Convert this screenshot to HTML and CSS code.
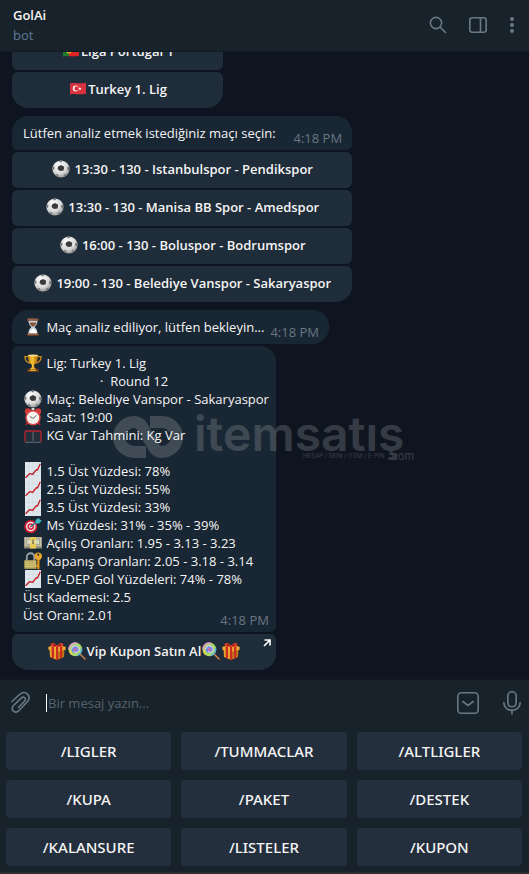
FILE: index.html
```html
<!DOCTYPE html>
<html lang="tr">
<head>
    <meta charset="UTF-8">
    <meta name="viewport" content="width=device-width, initial-scale=1.0">
    <title>GolAi</title>
    <link rel="stylesheet" href="styles.css">
</head>
<body>
    <!-- Emoji sprite -->
    <svg class="sprite" aria-hidden="true">
        <defs>
            <radialGradient id="ballShade" cx="0.4" cy="0.3" r="0.75">
                <stop offset="0" stop-color="#ffffff"/>
                <stop offset="0.6" stop-color="#d9d9d9"/>
                <stop offset="1" stop-color="#8e8e8e"/>
            </radialGradient>
            <linearGradient id="gold" x1="0" x2="1" y1="0" y2="0">
                <stop offset="0" stop-color="#b87408"/>
                <stop offset="0.4" stop-color="#fbc739"/>
                <stop offset="1" stop-color="#a9660a"/>
            </linearGradient>
        </defs>
        <symbol id="ball" viewBox="0 0 18 18">
            <circle cx="9" cy="9" r="8.6" fill="url(#ballShade)"/>
            <path d="M6 6.6 9 5l3.2 1.8-.6 3.6-3.8.6L5.6 9z" fill="#3b3b3b"/>
            <path d="M7 .8l3.6-.2L9.4 2.2H7.8zM.6 7l1.6-.8.2 2.6-1.6 2zM17.4 7.4l-1.8-.8-.6 2.4 1.8 2zM3.4 14l2.4.2 1 2.6-1.6-.6zM12 14.6l2.6-.8-1 1.8-2 1.2z" fill="#777"/>
        </symbol>
        <symbol id="hourglass" viewBox="0 0 18 18">
            <path d="M4.4 2h9.2c0 4-1.4 5.4-3.2 7 1.8 1.6 3.2 3 3.2 7H4.400c0-4 1.400-5.400 3.200-7-1.800-1.600-3.200-3-3.200-7z" fill="#c9d2d8"/>
            <path d="M5.400 4.600h7.200c-.6 2.200-2 3.200-3.600 4.200-1.600-1-3-2-3.600-4.200z" fill="#8a5137"/>
            <path d="M9 10.500c2 1.400 3.400 2.600 3.800 5H5.200c.4-2.400 1.800-3.600 3.800-5z" fill="#fff"/>
            <path d="M3 .4h12v2.400H3zM3 15.400h12v2.300H3z" fill="#74442f"/>
            <path d="M4 .8h9v.7H4zM4 15.800h9v.6H4z" fill="#b58068"/>
        </symbol>
        <symbol id="trophy" viewBox="0 0 18 18">
            <path d="M4.400 2.600H.9c0 4 2 6 5 6.400M13.600 2.600h3.500c0 4-2 6-5 6.400" fill="none" stroke="#d08f18" stroke-width="1.300"/>
            <path d="M4 1h10c0 5-1 8.500-3.800 9.600v2.600c.2 1 2 1.200 2.400 2.200H5.400c.4-1 2.200-1.200 2.400-2.200v-2.600C5 9.500 4 6 4 1z" fill="url(#gold)"/>
            <ellipse cx="9" cy="1.500" rx="5" ry=".9" fill="#ffe08a"/>
            <path d="M3.600 15.200h10.800v2.500H3.600z" fill="#8a4c0c"/>
            <path d="M6 15.600h6v1.300H6z" fill="#e8b23c"/>
        </symbol>
        <symbol id="clock" viewBox="0 0 18 18">
            <path d="M3.500 14.500l-1.600 2.800M14.500 14.500l1.600 2.800" stroke="#a32626" stroke-width="1.600"/>
            <circle cx="3.900" cy="3.400" r="3.100" fill="#d13a3a"/>
            <circle cx="14.100" cy="3.400" r="3.100" fill="#d13a3a"/>
            <path d="M7.500 0h3v2h-3z" fill="#d8d8d8"/>
            <circle cx="9" cy="9.800" r="7.700" fill="#d84545"/>
            <circle cx="9" cy="9.800" r="6.200" fill="#f6f2ee"/>
            <path d="M5.800 8.400L9 10.400l3.500-3" fill="none" stroke="#555" stroke-width=".9"/>
        </symbol>
        <symbol id="goal" viewBox="0 0 18 18">
            <path d="M2.500 6h13l1.600 9.500H.9z" fill="#242f39"/>
            <path d="M1 15.500V6.500Q1 5 2.500 5h13Q17 5 17 6.500v9" fill="none" stroke="#b8262f" stroke-width="1.300"/>
            <path d="M9 6v9M1 16.300h16" fill="none" stroke="#76808a" stroke-width=".8"/>
        </symbol>
        <symbol id="chart" viewBox="0 0 18 18">
            <path d="M1 0h16v18H1z" fill="#dfe7ec"/>
            <path d="M1 4.500h16M1 9h16M1 13.500h16M5 0v18M9 0v18M13 0v18" stroke="#cfdae1" stroke-width=".6"/>
            <path d="M1.600 15.800l4-4.200 3.200.6 3.500-4.600 1.300.2 2.700-6" fill="none" stroke="#c5161d" stroke-width="1.300"/>
        </symbol>
        <symbol id="target" viewBox="0 0 18 18">
            <circle cx="6.800" cy="10.600" r="6.600" fill="#c81e33"/>
            <circle cx="6.800" cy="10.600" r="4.800" fill="#f3e9ea"/>
            <circle cx="6.800" cy="10.600" r="3.400" fill="#d2243a"/>
            <circle cx="6.800" cy="10.600" r="1.800" fill="#f3e9ea"/>
            <circle cx="6.800" cy="10.600" r=".8" fill="#d2243a"/>
            <path d="M7 10.500L13 5.500" stroke="#247c8c" stroke-width="1.300"/>
            <path d="M11.400 6.800l.4-3L15.400 2l.2 1.800 2.200.4-2.200 3-3 .6z" fill="#3db6c0"/>
        </symbol>
        <symbol id="money" viewBox="0 0 18 18">
            <path d="M0 3h18v11.500H0z" fill="#8c8d74"/>
            <path d="M.8 3.600h16.400v8.600H.8z" fill="#d6d5bd"/>
            <path d="M2.200 5h13.600v5.800H2.200z" fill="none" stroke="#85876d" stroke-width=".8"/>
            <path d="M6 3h6v11.500H6z" fill="#e8c94d"/>
            <circle cx="9" cy="8" r="2.800" fill="#f4e8a8"/>
            <path d="M10.400 6.600C9 5.800 7.700 6.400 8 7.300c.3.800 2 .5 2.100 1.400.1.900-1.300 1.200-2.500.5M9 5.500v5" fill="none" stroke="#6d6226" stroke-width=".8"/>
        </symbol>
        <symbol id="lock" viewBox="0 0 18 18">
            <path d="M2.800 9V5c0-5 7.400-5 7.400 0v4" fill="none" stroke="#98a1a6" stroke-width="1.800"/>
            <path d="M.4 8.200h12v8.600H.4z" fill="#b9aa5b"/>
            <path d="M.4 10h12M.4 12.200h12M.4 14.400h12" stroke="#dacd86" stroke-width=".8"/>
            <path d="M13.300 6.500h2.200v10l-1 1.300-1.200-1.200v-1.500l-1.300-.6v-1.300l1.300-.4z" fill="#e29a20"/>
            <circle cx="14.200" cy="4.200" r="3.700" fill="#eba72b"/>
            <circle cx="14.200" cy="2.700" r="1.100" fill="#263239"/>
        </symbol>
        <symbol id="gift" viewBox="0 0 18 18">
            <path d="M1.500 6.500L9 9v9l-7-3z" fill="#e9a32b"/>
            <path d="M16.500 6.500L9 9v9l7-3z" fill="#bd7817"/>
            <path d="M.4 4.800L9 3l8.600 1.800v3L9 10 .4 7.800z" fill="#f0a932"/>
            <path d="M3.600 5.200L6 4.600v12.200l-2.200-.9zM12 4.600l2.400.6-.2 10.700-2.200.9zM8 3.500h2.200V18H8z" fill="#c92d20"/>
            <path d="M9 4.500C4 5.600 1.600 3.800 3 1.800 4.500-.2 8 1.200 9 4.500c1-3.300 4.500-4.700 6-2.700 1.400 2-1 3.800-6 2.700z" fill="#dd3a2b"/>
            <path d="M8.600 3.900C6.600 4.300 4.700 3.700 5.200 2.800c.5-.8 2.400-.2 3.400 1.100zM9.400 3.900c2 .4 3.900-.2 3.400-1.100-.5-.8-2.400-.2-3.400 1.100z" fill="#8f1a14"/>
        </symbol>
        <symbol id="lollipop" viewBox="0 0 18 18">
            <path d="M11 11l6 6" stroke="#c07a45" stroke-width="1.700" stroke-linecap="round"/>
            <circle cx="7.300" cy="7.300" r="6.900" fill="#a9d86a"/>
            <path d="M1 7.300a6.300 6.300 0 0 1 8-6" fill="none" stroke="#e59ad2" stroke-width="1.500"/>
            <path d="M13.500 6a6.300 6.300 0 0 1-4.500 7.400" fill="none" stroke="#5bb3d8" stroke-width="1.500"/>
            <path d="M4 12.200A5.500 5.500 0 0 1 2.200 8" fill="none" stroke="#f0d451" stroke-width="1.600"/>
            <circle cx="7.300" cy="7.300" r="3.800" fill="#6f8fe0"/>
            <path d="M3.400 7.300a3.900 3.900 0 0 1 7.600-.8 3 3 0 0 1-5 3" fill="none" stroke="#f3dcec" stroke-width="1"/>
            <circle cx="7.400" cy="7.400" r="1.500" fill="#d665b1"/>
        </symbol>
        <symbol id="flagTr" viewBox="0 0 18 18">
            <path d="M1 3.500c5-1.600 10 1 16-.8v11c-6 1.800-11-.8-16 .8z" fill="#d8323f"/>
            <circle cx="6.800" cy="8.500" r="3" fill="#fff"/>
            <circle cx="7.700" cy="8.500" r="2.300" fill="#d8323f"/>
            <path d="M10.900 6.900l.4 1.100 1.200.1-.9.800.3 1.200-1-.7-1 .7.300-1.200-.9-.8 1.200-.1z" fill="#fff"/>
        </symbol>
        <symbol id="flagPt" viewBox="0 0 18 18">
            <path d="M1 3.500c5-1.600 10 1 16-.8v11c-6 1.800-11-.8-16 .8z" fill="#e02420"/>
            <path d="M1 3.500c2-.7 4-.6 6-.3v11c-2-.3-4-.2-6 .3z" fill="#1c7a2b"/>
            <circle cx="7" cy="8.800" r="2.700" fill="#e8cf35"/>
            <path d="M5.800 7.400h2.400v2.400L7 10.900l-1.200-1.100z" fill="#d8322f"/>
        </symbol>
    </svg>

    <header class="topbar">
        <div class="peer">
            <h1>GolAi</h1>
            <p>bot</p>
        </div>
        <div class="actions">
            <button class="icon-btn" aria-label="Ara">
                <svg width="18" height="18" viewBox="0 0 18 18"><circle cx="7" cy="7" r="5.600"/><path d="M11.200 11.200l5.300 5.300"/></svg>
            </button>
            <button class="icon-btn" aria-label="Yan panel">
                <svg width="18" height="18" viewBox="0 0 18 18"><rect x=".8" y="1.800" width="16.400" height="14.400" rx="2.500"/><path d="M11.500 2v14"/></svg>
            </button>
            <button class="icon-btn dots" aria-label="Menü">
                <svg width="6" height="18" viewBox="0 0 6 18"><circle cx="3" cy="3" r="2"/><circle cx="3" cy="9" r="2"/><circle cx="3" cy="15" r="2"/></svg>
            </button>
        </div>
    </header>

    <main class="chat">
        <div class="group leagues">
            <button class="inline-btn"><svg class="emoji"><use href="#flagPt"/></svg>Liga Portugal 1</button>
            <button class="inline-btn"><svg class="emoji"><use href="#flagTr"/></svg>Turkey 1. Lig</button>
        </div>

        <div class="group matches">
            <div class="message">
                <p>Lütfen analiz etmek istediğiniz maçı seçin:</p>
                <time>4:18 PM</time>
            </div>
            <button class="inline-btn"><svg class="emoji"><use href="#ball"/></svg> 13:30 - 130 - Istanbulspor - Pendikspor</button>
            <button class="inline-btn"><svg class="emoji"><use href="#ball"/></svg> 13:30 - 130 - Manisa BB Spor - Amedspor</button>
            <button class="inline-btn"><svg class="emoji"><use href="#ball"/></svg> 16:00 - 130 - Boluspor - Bodrumspor</button>
            <button class="inline-btn"><svg class="emoji"><use href="#ball"/></svg> 19:00 - 130 - Belediye Vanspor - Sakaryaspor</button>
        </div>

        <div class="group waiting">
            <div class="message">
                <p><svg class="emoji"><use href="#hourglass"/></svg> Maç analiz ediliyor, lütfen bekleyin...</p>
                <time>4:18 PM</time>
            </div>
        </div>

        <div class="group analysis">
            <div class="message">
                <div class="lines">
                    <p><svg class="emoji"><use href="#trophy"/></svg> Lig: Turkey 1. Lig</p>
                    <p class="round">·&nbsp; Round 12</p>
                    <p><svg class="emoji"><use href="#ball"/></svg> Maç: Belediye Vanspor - Sakaryaspor</p>
                    <p><svg class="emoji"><use href="#clock"/></svg> Saat: 19:00</p>
                    <p><svg class="emoji"><use href="#goal"/></svg> KG Var Tahmini: Kg Var</p>
                    <br>
                    <p><svg class="emoji"><use href="#chart"/></svg> 1.5 Üst Yüzdesi: 78%</p>
                    <p><svg class="emoji"><use href="#chart"/></svg> 2.5 Üst Yüzdesi: 55%</p>
                    <p><svg class="emoji"><use href="#chart"/></svg> 3.5 Üst Yüzdesi: 33%</p>
                    <p><svg class="emoji"><use href="#target"/></svg> Ms Yüzdesi: 31% - 35% - 39%</p>
                    <p><svg class="emoji"><use href="#money"/></svg> Açılış Oranları: 1.95 - 3.13 - 3.23</p>
                    <p><svg class="emoji"><use href="#lock"/></svg> Kapanış Oranları: 2.05 - 3.18 - 3.14</p>
                    <p><svg class="emoji"><use href="#chart"/></svg> EV-DEP Gol Yüzdeleri: 74% - 78%</p>
                    <p>Üst Kademesi: 2.5</p>
                    <p>Üst Oranı: 2.01</p>
                </div>
                <time>4:18 PM</time>
            </div>
            <button class="inline-btn">
                <svg class="emoji"><use href="#gift"/></svg><svg class="emoji"><use href="#lollipop"/></svg>Vip Kupon Satın Al<svg class="emoji"><use href="#lollipop"/></svg><svg class="emoji"><use href="#gift"/></svg>
                <svg class="external" viewBox="0 0 8 8"><path d="M1.500 1H7v5.500M7 1L1 7"/></svg>
            </button>
        </div>

        <div class="watermark">
            <svg width="72" height="44" viewBox="0 0 72 44">
                <path d="M34 37H22a15 15 0 0 1 0-30c3 0 5 1 7 3L43 34c2 2 4 3 7 3a15 15 0 0 0 0-30H38"/>
            </svg>
            <div class="brand">
                <span class="name">itemsatış</span>
                <div class="sub">
                    <span class="tagline">HESAP / SKIN / ITEM / E-PIN</span>
                    <span class="domain">.com</span>
                </div>
            </div>
        </div>
    </main>

    <footer class="composer">
        <form class="entry">
            <button type="button" class="icon-btn" aria-label="Dosya ekle">
                <svg width="22" height="24" viewBox="0 0 22 24"><path d="M2 10.500L9.500 3.500c6-5 12.500 1.500 8 7l-8.500 9c-4 4-9-.5-5.500-5L11 7.300c3-2.700 6 .3 3.500 3l-6 6.200"/></svg>
            </button>
            <input type="text" aria-label="Mesaj" placeholder="Bir mesaj yazın...">
            <button type="button" class="icon-btn" aria-label="Klavyeyi gizle">
                <svg width="22" height="22" viewBox="0 0 22 22"><rect x=".8" y=".8" width="20.400" height="20.400" rx="3.500"/><path d="M5.800 9.500L11 13.500l5.200-4"/></svg>
            </button>
            <button type="button" class="icon-btn mic" aria-label="Ses kaydı">
                <svg width="18" height="24" viewBox="0 0 18 24"><rect x="4.800" y=".8" width="8.400" height="15" rx="4.200"/><path d="M.8 11.500c0 10.500 16.400 10.500 16.400 0M9 19.500V23"/></svg>
            </button>
        </form>
        <div class="keyboard">
            <button>/LIGLER</button>
            <button>/TUMMACLAR</button>
            <button>/ALTLIGLER</button>
            <button>/KUPA</button>
            <button>/PAKET</button>
            <button>/DESTEK</button>
            <button>/KALANSURE</button>
            <button>/LISTELER</button>
            <button>/KUPON</button>
        </div>
    </footer>
</body>
</html>
```
FILE: styles.css
```css
* {
    box-sizing: border-box;
    margin: 0;
    padding: 0;
}

body {
    display: flex;
    flex-direction: column;
    height: 100vh;
    background: #0e1520;
    color: #f5f5f5;
    font-family: 'Open Sans', 'Noto Sans', sans-serif;
    font-size: 13px;
    line-height: 18px;
}

button,
input {
    font: inherit;
    color: inherit;
    border: none;
    background: none;
}

button {
    cursor: pointer;
}

.sprite {
    position: absolute;
    width: 0;
    height: 0;
}

.emoji {
    width: 18px;
    height: 18px;
    margin: 0 1px;
    vertical-align: top;
}

/* Header */
.topbar {
    display: flex;
    justify-content: space-between;
    flex: none;
    height: 52px;
    padding: 6px 14px 0 13px;
    background: #18222b;
    border-bottom: 1px solid #121a23;
}

.peer h1 {
    font-size: 13px;
    font-weight: 600;
}

.peer p {
    margin-top: 2px;
    color: #5f7b98;
}

.actions {
    display: flex;
    align-items: center;
    gap: 22px;
    height: 38px;
}

.icon-btn {
    display: flex;
}

.icon-btn svg {
    fill: none;
    stroke: #6b7882;
    stroke-width: 1.6;
    stroke-linecap: round;
}

.icon-btn.dots svg {
    fill: #6b7882;
    stroke: none;
}

/* Messages */
.chat {
    position: relative;
    display: flex;
    flex-direction: column;
    justify-content: flex-end;
    align-items: flex-start;
    flex: 1;
    min-height: 0;
    padding: 0 12px 9px;
    overflow: hidden;
}

.group {
    display: flex;
    flex-direction: column;
    gap: 2px;
    flex: none;
    margin-top: 8px;
}

.leagues {
    min-width: 211px;
}

.analysis {
    margin-top: 2px;
}

.message {
    display: flex;
    justify-content: space-between;
    gap: 6px;
    padding: 8px 10px 3px 11px;
    background: #192633;
    border-radius: 16px 16px 6px 6px;
}

.message p {
    white-space: nowrap;
    padding-bottom: 5px;
}

.message time {
    align-self: flex-end;
    color: #687683;
}

.waiting .message {
    border-bottom-right-radius: 16px;
}

.analysis .message {
    display: grid;
    padding-right: 7px;
    border-top-left-radius: 6px;
}

.analysis .lines,
.analysis time {
    grid-area: 1 / 1;
}

.analysis .lines {
    padding-bottom: 5px;
}

.analysis .lines p {
    padding-bottom: 0;
}

.analysis time {
    justify-self: end;
}

.message .round {
    padding-left: 77px;
}

.inline-btn {
    position: relative;
    padding: 8px 21px 10px;
    background: #1f2c39;
    border-radius: 6px;
    font-weight: 600;
    text-align: center;
    white-space: nowrap;
}

.inline-btn:last-child {
    border-radius: 6px 6px 16px 16px;
}

.external {
    position: absolute;
    top: 5px;
    right: 5px;
    width: 8px;
    height: 8px;
    fill: none;
    stroke: #fff;
    stroke-width: 1.6;
}

/* Watermark laid over the conversation */
.watermark {
    position: absolute;
    top: 363px;
    left: 112px;
    display: flex;
    gap: 10px;
    opacity: 0.17;
    pointer-events: none;
}

.watermark svg {
    fill: none;
    stroke: #fff;
    stroke-width: 12;
}

.brand {
    font-family: Inter, sans-serif;
}

.brand .name {
    display: block;
    font-size: 48px;
    font-weight: 600;
    line-height: 38px;
}

.brand .sub {
    display: flex;
    gap: 4px;
    margin-left: 109px;
}

.brand .tagline {
    font-size: 6px;
    line-height: 6px;
}

.brand .domain {
    font-size: 11px;
    line-height: 6px;
}

/* Composer and bot keyboard */
.composer {
    flex: none;
    background: #18222b;
    border-top: 1px solid #111922;
    border-bottom: 2px solid #2c2b2d;
}

.entry {
    display: flex;
    align-items: center;
    height: 46px;
    padding: 0 8px 0 10px;
}

.entry input {
    flex: 1;
    min-width: 0;
    height: 18px;
    margin: 0 16px 0 14px;
    padding-left: 1px;
    border-left: 1px solid #fff;
    outline: none;
}

.entry input::placeholder {
    color: #56626c;
    opacity: 1;
}

.mic {
    margin-left: 24px;
}

.keyboard {
    display: grid;
    grid-template-columns: repeat(3, 1fr);
    gap: 10px;
    padding: 6px 7px 6px 6px;
}

.keyboard button {
    height: 38px;
    background: #242f3d;
    border-radius: 4px;
    font-family: 'Noto Sans', sans-serif;
    font-size: 15px;
    font-weight: 500;
}
```
